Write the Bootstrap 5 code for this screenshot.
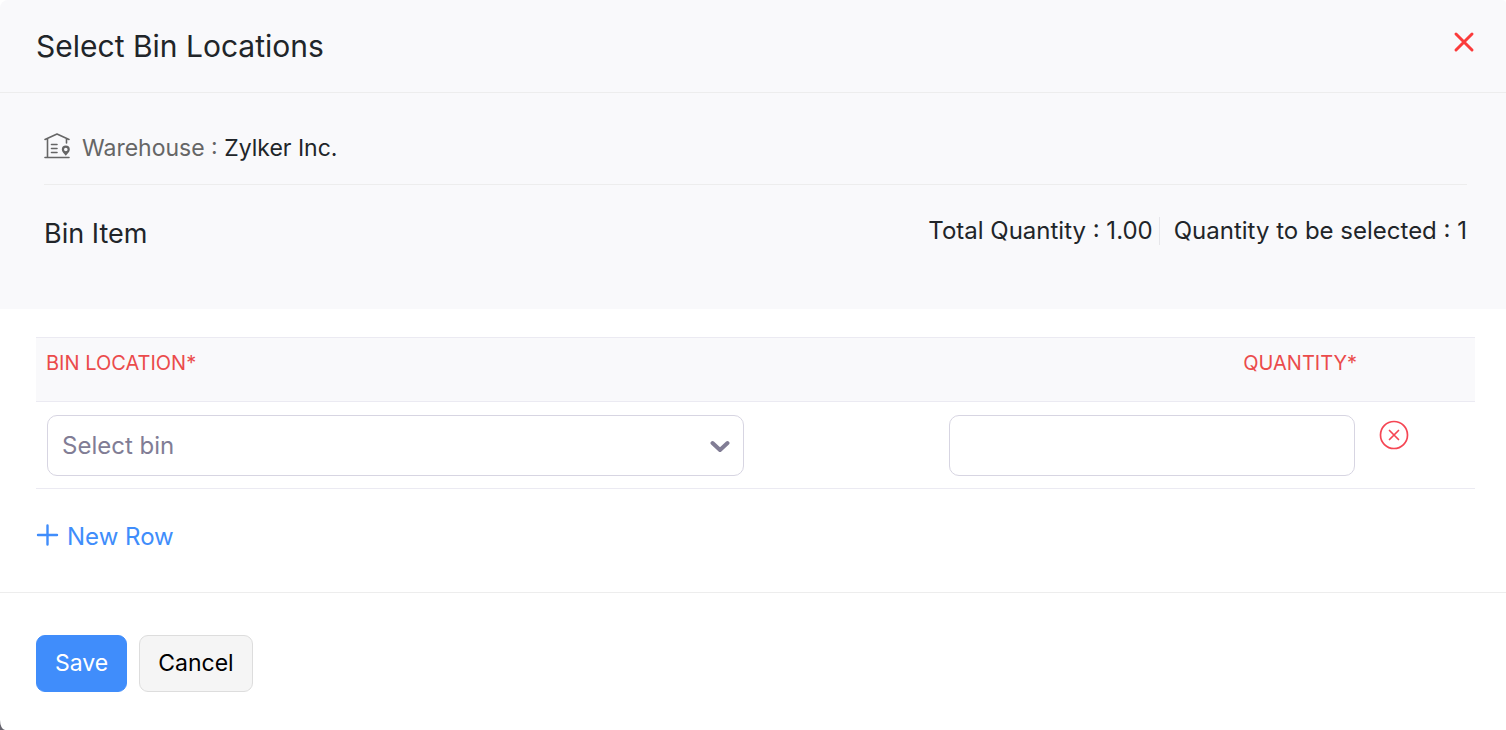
<!DOCTYPE html>
<html lang="en">
<head>
<meta charset="utf-8">
<meta name="viewport" content="width=device-width, initial-scale=1">
<title>Select Bin Locations</title>
<link href="https://cdn.jsdelivr.net/npm/bootstrap@5.3.0/dist/css/bootstrap.min.css" rel="stylesheet">
<style>
  :root { --line: #ebeaf2; --soft: #f9f9fb; --blue: #408dfb; --ink: #212529; }
  body { font-family: Inter, "Liberation Sans", sans-serif; font-size: 24px; line-height: 32px; color: var(--ink); background: #66646e; }
  .dialog-panel { background: #fff; border-bottom-left-radius: 5px 10px; }
  .dialog-top { background: var(--soft); border-bottom: 1px solid #ededed; border-radius: 8px 4px 0 0; padding: 26px 31px 26px 36px; }
  .dialog-title { font-size: 30px; line-height: 40px; font-weight: 400; }
  .close-btn { width: 22px; height: 32px; }
  .summary { background: var(--soft); padding: 39px 39px 58px 44px; }
  .warehouse { font-size: 23px; padding-bottom: 20px; border-bottom: 1px solid #ededed; }
  .warehouse-label { color: #666; }
  .item-name { font-size: 27px; line-height: 34px; font-weight: 400; }
  .total-qty { border-right: 1px solid #e6e6ea; line-height: 28px; padding-right: 6px; margin-right: 14px; }
  .left-qty { line-height: 28px; }
  .dialog-content { padding: 28px 31px 39px 36px; }
  .bin-table { table-layout: fixed; border-top: 1px solid var(--line); }
  .bin-table th { background: var(--soft); color: #eb4b4b; font-size: 20px; line-height: 24px; font-weight: 400; padding: 13px 10px 26px; border-bottom: 1px solid var(--line); }
  .bin-table td { padding: 13px 12px 12px 11px; border-bottom: 1px solid var(--line); }
  .col-bin { width: 50%; }
  .col-qty { width: 42.5%; }
  .bin-table .form-select, .bin-table .form-control { height: 61px; font-size: 24px; line-height: 32px; border-color: #d7d5e2; border-radius: 10px; padding-left: 14px; }
  .bin-table .form-select { color: #817d95; background-size: 20px 14px; background-position: right 13px center; background-image: url("data:image/svg+xml,%3csvg xmlns='http://www.w3.org/2000/svg' viewBox='0 0 20 14'%3e%3cpath d='M2.5 4l7.500 7 7.500-7' fill='none' stroke='%23817d95' stroke-width='4' stroke-linecap='round' stroke-linejoin='round'/%3e%3c/svg%3e"); }
  .bin-table .form-control { width: 69%; }
  .text-action { color: var(--blue); font-size: 24px; line-height: 32px; margin-top: 32px; }
  .dialog-actions { border-top: 1px solid #ededed; padding: 42px 36px 38px; gap: 12px; }
  .dialog-actions .btn { font-size: 23px; line-height: 31px; padding: 12px 18px; border-radius: 9px; }
  .btn-save { --bs-btn-color: #fff; --bs-btn-bg: var(--blue); --bs-btn-border-color: var(--blue); --bs-btn-hover-color: #fff; --bs-btn-hover-bg: #2f7ff0; }
  .btn-cancel { --bs-btn-color: #000; --bs-btn-bg: #f5f5f5; --bs-btn-border-color: #ddd; --bs-btn-hover-bg: #eee; }
</style>
</head>
<body>
<main class="dialog-panel min-vh-100">
  <header class="dialog-top d-flex justify-content-between align-items-start">
    <h1 class="dialog-title m-0">Select Bin Locations</h1>
    <button type="button" class="close-btn btn p-0 border-0 d-flex align-items-center" aria-label="Close">
      <svg width="22" height="22" viewBox="0 0 22 22" fill="none" stroke="#fb3b3b" stroke-width="3" stroke-linecap="round"><path d="M3 3l16 16M19 3L3 19"/></svg>
    </button>
  </header>
  <section class="summary">
    <div class="warehouse d-flex align-items-center">
      <svg class="me-2 mb-1 flex-shrink-0" width="30" height="28" viewBox="0 0 30 28" fill="none" stroke="#666" stroke-width="1.600" stroke-linecap="round" stroke-linejoin="round">
        <path d="M1 7.500L13 2l12 5.500M3.500 7v18M22.500 7v4M1 25.500h24M7.500 12.500h5.500M7.500 16.500h5.500M7.500 20.500h5.500"/>
        <path fill="#666" fill-rule="evenodd" stroke="none" d="M21.800 13.500a4 4 0 0 0-4 4c0 2.500 2.500 4 4 6.300 1.500-2.300 4-3.800 4-6.300a4 4 0 0 0-4-4zm0 2.200a1.800 1.800 0 1 1 0 3.600 1.800 1.800 0 0 1 0-3.600z"/>
      </svg>
      <div><span class="warehouse-label">Warehouse :</span> Zylker Inc.</div>
    </div>
    <div class="d-flex flex-wrap justify-content-between align-items-start pt-4 mt-2">
      <h2 class="item-name m-0">Bin Item</h2>
      <div class="d-flex">
        <div class="total-qty">Total Quantity : 1.00</div>
        <div class="left-qty">Quantity to be selected : 1</div>
      </div>
    </div>
  </section>
  <form>
    <div class="dialog-content">
      <table class="bin-table w-100">
        <colgroup><col class="col-bin"><col class="col-qty"><col></colgroup>
        <thead>
          <tr><th scope="col"><label for="bin">BIN LOCATION*</label></th><th scope="col" class="text-end"><label for="qty">QUANTITY*</label></th><th></th></tr>
        </thead>
        <tbody>
          <tr>
            <td><select id="bin" class="form-select"><option>Select bin</option></select></td>
            <td><input id="qty" type="text" class="form-control ms-auto"></td>
            <td class="align-top">
              <button type="button" class="btn p-0 border-0 d-flex mt-1" aria-label="Remove row">
                <svg width="32" height="32" viewBox="0 0 32 32" fill="none" stroke="#f54654" stroke-width="1.700" stroke-linecap="round"><circle cx="16" cy="16" r="13.500"/><path d="M11.500 11.500l9 9M20.500 11.500l-9 9"/></svg>
              </button>
            </td>
          </tr>
        </tbody>
      </table>
      <button type="button" class="text-action btn p-0 border-0 d-flex align-items-center gap-2">
        <svg class="mb-1" width="23" height="22" viewBox="0 0 23 22" fill="none" stroke="#408dfb" stroke-width="2.400" stroke-linecap="round"><path d="M2 11h19M11.500 1.500v19"/></svg>
        New Row
      </button>
    </div>
    <div class="dialog-actions d-flex">
      <button type="submit" class="btn btn-save">Save</button>
      <button type="button" class="btn btn-cancel">Cancel</button>
    </div>
  </form>
</main>
<script src="https://cdn.jsdelivr.net/npm/bootstrap@5.3.0/dist/js/bootstrap.bundle.min.js"></script>
</body>
</html>
